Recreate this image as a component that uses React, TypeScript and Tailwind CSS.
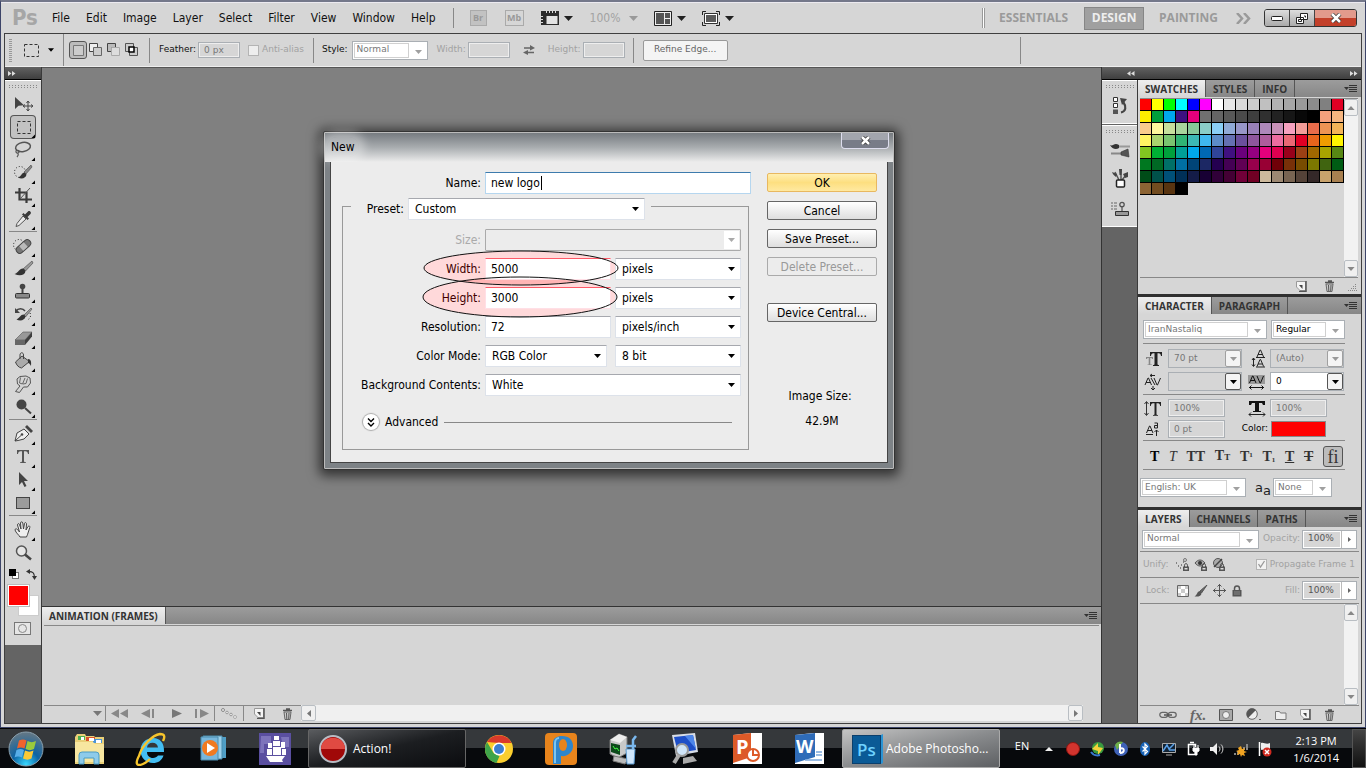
import { useId, type ReactNode } from "react";
import clsx from "clsx";

const menus = ["File", "Edit", "Image", "Layer", "Select", "Filter", "View", "Window", "Help"];

const swatches = [
  "ff0000 ffff00 00ff00 00ffff 0000ff ff00ff ffffff e6e6e6 d9d9d9 cccccc c0c0c0 b3b3b3 a6a6a6 9a9a9a 8c8c8c 808080 e00024",
  "fcee00 00a03c 00a8ec 3e1080 e4007c 707070 646464 585858 4a4a4a 3e3e3e 303030 222222 161616 080808 000000 f4a07c f5b580",
  "f9cc8c fef79c c6e09c a8d59c 88c999 8acdc8 8acef5 90aad6 9796c8 9880b8 ae88ba c890b8 f5a0be f29c98 e86c4a ee9454 f3b458",
  "fff462 a9d46e 7ac470 30b474 3cb8b4 40b8ef 5c8cc8 6470b2 6a4f9c 8e569c ae5c9c ec6ca0 ea6874 e00024 e8641c f09c00 fff400",
  "82c620 00b034 00a03c 00a098 00a8ec 0068b4 304498 401080 6a007c 940080 e4007c e00050 98001a 9c4014 a06800 a8a400 588814",
  "007820 006824 007068 0070a4 004478 1c2864 240050 440054 600054 98004c 980034 700008 783008 784c00 7c7800 406410 005c14",
  "004c18 00504a 005078 003058 141c48 180034 300038 440034 700038 700024 ccb99c 9c8872 786452 544238 342828 c8a26c a88050",
  "8c6434 724c20 583410 000000",
].flatMap((row) => row.split(" "));

const small = "font-['DejaVu_Sans',sans-serif] text-[9px]";

function Svg({ w, h, children, className }: { w: number; h: number; children: ReactNode; className?: string }) {
  return (
    <svg width={w} height={h} viewBox={`0 0 ${w} ${h}`} fill="none" aria-hidden="true" className={clsx("shrink-0", className)}>
      {children}
    </svg>
  );
}

function Down({ className = "text-[#222]" }: { className?: string }) {
  return (
    <Svg w={9} h={5} className={className}>
      <path d="M0 0h9L4.500 5z" fill="currentColor" />
    </Svg>
  );
}

/* ---------- tools ---------- */

const tools: { name: string; flyout?: boolean; art: ReactNode }[][] = [
  [
    {
      name: "Move",
      art: (
        <>
          <path d="M4 4v12l3.500-3.200 5.500-.6z" fill="#444" />
          <path d="M17 8.500v9M12.500 13h9M15.500 10l1.500-2 1.500 2M15.500 16l1.500 2 1.500-2M14 11.500L12 13l2 1.500M20 11.500l2 1.500-2 1.500" stroke="#444" />
        </>
      ),
    },
    { name: "Marquee", flyout: true, art: <rect x="6.500" y="5.500" width="13" height="12" stroke="#333" strokeDasharray="3 2" /> },
    {
      name: "Lasso",
      flyout: true,
      art: (
        <>
          <ellipse cx="12" cy="8" rx="7.500" ry="4.500" transform="rotate(-10 12 8)" stroke="#555" strokeWidth="1.500" />
          <path d="M6 11c-2 1-1 3.500 1 3s1-3-.5-2.500M7 14c1 2 0 3-1 4" stroke="#555" strokeWidth="1.200" />
        </>
      ),
    },
    {
      name: "Quick Selection",
      flyout: true,
      art: (
        <>
          <circle cx="9" cy="10" r="5.500" stroke="#222" strokeDasharray="1 2" />
          <path d="M20 3l-7 7 2 2 6-7z" fill="#888" stroke="#444" strokeWidth=".6" />
          <path d="M13.500 10.500c-3 0-3 4-6.500 5 4 2 8 .5 8.500-3z" fill="#333" />
        </>
      ),
    },
    {
      name: "Crop",
      flyout: true,
      art: (
        <>
          <path d="M8.500 3v11.500H21M4 7.500h11.500V18" stroke="#3a3a3a" strokeWidth="2.200" />
          <path d="M9 14L19 3" stroke="#555" />
        </>
      ),
    },
    {
      name: "Eyedropper",
      flyout: true,
      art: (
        <>
          <path d="M12 8l3 3-7 6.500-3 1 1-3z" fill="#e8e8e8" stroke="#555" />
          <path d="M11 6.500l5.500 5.500 1.500-1.500-1.500-1.500 3-3c1.500-1.500-1-4-2.500-2.500l-3 3L12.500 5z" fill="#3a3a3a" />
        </>
      ),
    },
  ],
  [
    {
      name: "Healing Brush",
      flyout: true,
      art: (
        <>
          <circle cx="8" cy="10" r="5.500" stroke="#222" strokeDasharray="1 2" />
          <rect x="4" y="8" width="17" height="7" rx="3.500" transform="rotate(-42 12.500 11.500)" fill="#777" stroke="#444" />
          <rect x="9.500" y="8.500" width="6" height="6" transform="rotate(-42 12.500 11.500)" fill="#bbb" />
        </>
      ),
    },
    {
      name: "Brush",
      flyout: true,
      art: (
        <>
          <path d="M21 3l-8.500 7.500 2 2.500L22 5z" fill="#999" stroke="#444" strokeWidth=".6" />
          <path d="M12.500 10.500C8 10 8 14.500 3.500 16c5 2.500 10.500 1.500 11-3z" fill="#333" />
        </>
      ),
    },
    {
      name: "Clone Stamp",
      flyout: true,
      art: (
        <>
          <circle cx="11.500" cy="5.500" r="2.800" fill="#444" />
          <path d="M10.500 8h2v5h-2z" fill="#444" />
          <rect x="4.500" y="12.500" width="14" height="4.500" rx="1" fill="#888" stroke="#333" />
        </>
      ),
    },
    {
      name: "History Brush",
      flyout: true,
      art: (
        <>
          <path d="M5 7c2-3 7-3 9 0" stroke="#444" strokeWidth="1.500" />
          <path d="M4 4v5h5z" fill="#444" />
          <path d="M20 4l-7 7 1.500 2L21 5z" fill="#999" stroke="#444" strokeWidth=".6" />
          <path d="M13 10.500c-4 0-4 3.500-7.500 5 4 2 8.500.5 9-3z" fill="#333" />
          <path d="M19 9c1.500 3 0 6-3 7" stroke="#222" strokeDasharray="1 2" />
        </>
      ),
    },
    {
      name: "Eraser",
      flyout: true,
      art: (
        <>
          <path d="M4 13l8-8h9l-7 8z" fill="#999" stroke="#555" strokeWidth=".6" />
          <path d="M4 13h10v5H4z" fill="#666" />
          <path d="M14 13l7-8v4.500L14 18z" fill="#3f3f3f" />
        </>
      ),
    },
    {
      name: "Paint Bucket",
      flyout: true,
      art: (
        <>
          <path d="M4.500 12L11 6l7.500 5.500-8 6.500c-3-.5-5-3-6-6z" fill="#aaa" stroke="#444" />
          <path d="M9 9V5c0-3 3.500-3 3.500 0v4" stroke="#444" />
          <path d="M17 9c3 0 3.500 3 3 7-1-2-2-3-3-3z" fill="#333" />
        </>
      ),
    },
    {
      name: "Smudge",
      flyout: true,
      art: (
        <>
          <path d="M4.500 18.500L9 13 6.500 11 6 6l3-2.500 6-.5 4 2 .5 5-3 4h-4l-4 5.500z" fill="#d4d4d4" stroke="#555" />
          <path d="M9.500 4.500L8.500 10l3 1 2.500-6M12 11l3-.5 1.500-5" stroke="#666" />
        </>
      ),
    },
    {
      name: "Burn",
      flyout: true,
      art: (
        <>
          <circle cx="10.500" cy="8.500" r="5" fill="#444" />
          <path d="M14 12l6 5.500" stroke="#444" strokeWidth="2" />
        </>
      ),
    },
  ],
  [
    {
      name: "Pen",
      flyout: true,
      art: (
        <>
          <path d="M4 18l2-8 7-4 5 5-5 5-6 1.500z" fill="#eee" stroke="#444" />
          <path d="M4 18l6-5.500" stroke="#444" />
          <circle cx="11" cy="11.500" r="1.300" fill="#444" />
          <path d="M14 4l2-2 6 6-2 2z" fill="#444" />
        </>
      ),
    },
    {
      name: "Type",
      flyout: true,
      art: <path d="M6 4h12v4h-1c-.3-2-1-2.800-2.500-2.800H13V15c0 1 .5 1.300 2 1.300v.8H9v-.8c1.500 0 2-.3 2-1.300V5.200H9.500C8 5.200 7.300 6 7 8H6z" fill="#555" />,
    },
    { name: "Path Selection", flyout: true, art: <path d="M8 3v13l3-3 2.500 5 2-1-2.500-5h4z" fill="#444" /> },
    {
      name: "Rectangle",
      flyout: true,
      art: <rect x="5.500" y="5.500" width="13" height="11" fill="#9c9c9c" stroke="#444" />,
    },
  ],
  [
    {
      name: "Hand",
      flyout: true,
      art: (
        <path d="M9 18c-1-2-4-4-5-7 0-1.500 1.500-1.500 2.500-.5L8.500 13 6.500 6c0-1.500 1.500-2 2-.5L10 10l-.5-6c0-1.500 2-1.500 2.300 0l.7 6 1-5.500c.3-1.500 2-1 2 .5L15 11l2-3.500c1-1 2.300-.3 1.800 1L17 14c-.5 2-1 2.500-1.500 4z" fill="#eee" stroke="#444" />
      ),
    },
    {
      name: "Zoom",
      art: (
        <>
          <circle cx="10.500" cy="9" r="5" fill="#e6e6e6" stroke="#555" strokeWidth="1.500" />
          <path d="M14 12.500l6 5" stroke="#444" strokeWidth="2.500" />
        </>
      ),
    },
  ],
];

function Grip() {
  return <div className="mx-auto h-1 w-[28px] bg-[repeating-linear-gradient(#d6d6d6_0_1px,transparent_1px_2px),repeating-linear-gradient(90deg,#888_0_1px,transparent_1px_3px)]" />;
}

function ToolBar() {
  return (
    <aside aria-label="Tools" className="flex w-[37px] shrink-0 flex-col border-r border-[#3a3a3a] bg-[#646464]">
      <div className="flex h-[13px] items-center border-b border-black bg-gradient-to-b from-[#626262] to-[#3f3f3f] pl-[3px]">
        <Svg w={8} h={5}>
          <path d="M0 0v5l3.500-2.500zM4 0v5l3.500-2.500z" fill="#ddd" />
        </Svg>
      </div>
      <div className="flex flex-col border-t border-white bg-[#d6d6d6] pt-[3px] pb-[10px]">
        <Grip />
        <div className="mt-1 flex flex-col">
          {tools.map((group, g) => (
            <div key={g} className="flex flex-col items-center">
              {g > 0 && <div className="mt-px mb-[2px] h-px w-7 bg-[#888]" />}
              {group.map((tool) => (
                <button key={tool.name} aria-label={tool.name} className="flex h-[23px] w-full items-center justify-center">
                  <span className={clsx("flex rounded-[3px]", tool.name === "Marquee" && "bg-[#c2c2c2] ring-1 ring-[#555]")}>
                    <Svg w={24} h={22}>
                      {tool.art}
                      {tool.flyout && <path d="M24 18.500V22h-3.500z" fill="#000" />}
                    </Svg>
                  </span>
                </button>
              ))}
            </div>
          ))}
        </div>
        <div className="mt-[5px] flex justify-between px-1">
          <Svg w={11} h={11}>
            <rect x="3.500" y="3.500" width="6" height="6" fill="#fff" stroke="#777" />
            <path d="M0 0h7v7H0z" fill="#000" />
          </Svg>
          <Svg w={11} h={11}>
            <path d="M3 2.500c4 0 5.500 1.500 5.500 6" stroke="#333" strokeWidth="1.300" />
            <path d="M0 2.500L4 0v5zM8.500 11L6 7h5z" fill="#333" />
          </Svg>
        </div>
        <div className="relative mt-[5px] ml-[3px] h-[31px] w-[31px]">
          <button aria-label="Background color" className="absolute right-0 bottom-0 size-[21px] border border-[#ccc] bg-white" />
          <button aria-label="Foreground color" className="absolute top-0 left-0 size-[21px] border border-white bg-[#f00] outline-1 outline-[#bbb]" />
        </div>
        <button aria-label="Quick mask" className="mt-[6px] ml-[9px] flex h-[13px] w-[17px] items-center justify-center border border-[#777] bg-[#e6e6e6]">
          <Svg w={9} h={9}>
            <circle cx="4.500" cy="4.500" r="4" stroke="#888" />
          </Svg>
        </button>
      </div>
    </aside>
  );
}

/* ---------- top bars ---------- */

function MenuBar() {
  return (
    <header className="flex h-[31px] shrink-0 items-center border-t border-[#eceaf0] pr-2 pl-[11px] text-xs">
      <span className="w-[40px] text-[22px] leading-6 font-bold text-[#a6a6a6]">Ps</span>
      <nav className="flex gap-4">
        {menus.map((m) => (
          <button key={m}>{m}</button>
        ))}
      </nav>
      <div className="ml-[17px] h-5 w-px bg-[#888]" />
      <button className="ml-4 h-4 w-[17px] border border-[#aaa] bg-[#c2c2c2] font-['Open_Sans'] text-[9px] leading-3 font-bold text-[#999]">Br</button>
      <button className="ml-[18px] h-4 w-[19px] border border-[#aaa] font-['Open_Sans'] text-[9px] leading-3 font-bold text-[#999]">Mb</button>
      <button aria-label="View extras" className="ml-[17px] flex items-center gap-[5px]">
        <Svg w={18} h={16}>
          <path d="M0 1h18v14H0z" fill="#2c2c2c" />
          <path d="M5.500 6h11v8h-11z" fill="#e4e4e4" />
          <path d="M5.500 1v2M8.500 1v2M11.500 1v2M14.500 1v2M0 6.500h2M0 9.500h2M0 12.500h2" stroke="#ddd" />
        </Svg>
        <Down />
      </button>
      <button className="ml-[17px] flex items-center gap-[9px] text-[#a2a2a2]">
        100%
        <Down className="text-[#999]" />
      </button>
      <button aria-label="Arrange documents" className="ml-4 flex items-center gap-[5px]">
        <Svg w={18} h={15}>
          <path d="M.5.500h17v14H.5z" fill="#eee" stroke="#222" />
          <path d="M2 2h8v11H2zM11 2h5v5h-5zM11 8h5v5h-5z" fill="#555" />
        </Svg>
        <Down />
      </button>
      <button aria-label="Screen mode" className="ml-4 flex items-center gap-[5px]">
        <Svg w={18} h={15}>
          <path d="M.5 4V.5H4M14 .5h3.500V4M17.500 11v3.500H14M4 14.500H.5V11" stroke="#222" />
          <path d="M2.500 2.500h13v10h-13z" fill="#fff" stroke="#333" />
          <path d="M4 4h10v7H4z" fill="#5a5a5a" />
        </Svg>
        <Down />
      </button>
      <div className="flex-1" />
      <div className="mr-[14px] h-5 w-[3px] border-x border-[#999] bg-white" />
      <div className="flex items-center font-['Open_Sans'] text-[12px] font-bold text-[#9a9a9a]">
        <button>ESSENTIALS</button>
        <button className="mr-[15px] ml-4 h-[23px] w-[60px] border border-[#868686] bg-[#a0a0a0] text-[#eee]">DESIGN</button>
        <button>PAINTING</button>
      </div>
      <button aria-label="More workspaces" className="mr-[13px] ml-[18px]">
        <Svg w={15} h={11}>
          <path d="M1 0l5 5.500L1 11M8 0l5 5.500L8 11" stroke="#9a9a9a" strokeWidth="2.500" />
        </Svg>
      </button>
      <div className="flex h-[18px] overflow-hidden rounded-[3px] border border-[#333]">
        <button aria-label="Minimize" className="flex w-[25px] items-center justify-center border-r border-[#444] bg-gradient-to-b from-[#ddd] to-[#aaa]">
          <Svg w={12} h={5}>
            <rect x=".5" y=".5" width="11" height="4" rx="1" fill="#fff" stroke="#222" />
          </Svg>
        </button>
        <button aria-label="Restore" className="flex w-[25px] items-center justify-center border-r border-[#444] bg-gradient-to-b from-[#ddd] to-[#aaa]">
          <Svg w={12} h={11}>
            <path d="M4.500.5h7v6h-7zM.5 4.500h7v6h-7z" fill="#fff" stroke="#222" />
            <path d="M2.500 6.500h3v2h-3zM8 3h1.500v1.500" stroke="#222" />
          </Svg>
        </button>
        <button aria-label="Close" className="flex w-[41px] items-center justify-center bg-gradient-to-b from-[#e29a8c] from-50% to-[#c3402a] to-50%">
          <Svg w={12} h={10}>
            <path d="M2 1l8 8M10 1L2 9" stroke="#333" strokeWidth="4" />
            <path d="M2 1l8 8M10 1L2 9" stroke="#fff" strokeWidth="2.500" />
          </Svg>
        </button>
      </div>
    </header>
  );
}

function PanelSelect({ label, value, className, tone = "text-[#777]" }: { label: string; value: string; className?: string; tone?: string }) {
  return (
    <span className={clsx("relative flex h-[19px] items-center border border-[#aaafb4] bg-white p-px", className)}>
      <select aria-label={label} className={clsx("h-full w-full appearance-none bg-white pl-[3px] outline-none", tone)}>
        <option>{value}</option>
      </select>
      <span className="pointer-events-none absolute inset-y-px right-[18px] left-px border border-[#d0d0d0]" />
      <Down className="pointer-events-none absolute top-[8px] right-[5px] h-1 w-[7px] text-[#a0a0a0]" />
    </span>
  );
}

function Box({ id, label, value, className }: { id: string; label?: string; value: string; className?: string }) {
  return (
    <input
      id={id}
      aria-label={label}
      defaultValue={value}
      className={clsx("border border-[#aaafb4] bg-[#d6d6d6] pl-[5px] text-[#777] shadow-[inset_0_0_0_1px_#eee] outline-none", className)}
    />
  );
}

function OptionsBar() {
  return (
    <div className={clsx("flex h-[33px] shrink-0 items-center border-b border-[#eee] bg-[#d6d6d6] pl-[4px]", small)}>
      <div className="h-[23px] w-[3px] bg-[repeating-linear-gradient(#999_0_1px,transparent_1px_2px)]" />
      <button aria-label="Marquee presets" className="ml-3 flex items-center gap-[9px]">
        <Svg w={15} h={13}>
          <rect x=".5" y=".5" width="14" height="12" stroke="#333" strokeDasharray="3 2" />
        </Svg>
        <Down className="h-1 w-[6px] text-black" />
      </button>
      <div className="ml-[9px] h-full w-px bg-[#888]" />
      <button aria-label="New selection" className="mr-[2px] ml-[5px] flex size-[18px] items-center justify-center rounded-[3px] border border-[#555] bg-[#bcbcbc]">
        <Svg w={11} h={11}>
          <path d="M.5.500h10v10H.5z" fill="#ccc" stroke="#777" />
        </Svg>
      </button>
      <div className="flex items-center gap-1">
        <button aria-label="Add to selection">
          <Svg w={14} h={14}>
            <path d="M.5.500h8v8h-8z" fill="#eee" stroke="#444" />
            <path d="M4.500 4.500h8v8h-8z" fill="#ccc" stroke="#666" />
          </Svg>
        </button>
        <button aria-label="Subtract from selection">
          <Svg w={14} h={14}>
            <path d="M.5.500h8v4h-4v4h-4z" fill="#bbb" stroke="#444" />
            <path d="M4.500 4.500h8v8h-8z" fill="#ddd" stroke="#aaa" />
          </Svg>
        </button>
        <button aria-label="Intersect with selection">
          <Svg w={14} h={14}>
            <path d="M.5.500h8v8h-8zM4.500 4.500h8v8h-8z" fill="#ccc" stroke="#555" />
            <path d="M4 4h5v5H4z" fill="#fff" stroke="#000" strokeWidth="1.500" />
          </Svg>
        </button>
      </div>
      <div className="ml-[10px] h-[25px] w-px bg-[#888]" />
      <label htmlFor="feather" className="ml-[9px]">Feather:</label>
      <Box id="feather" value="0 px" className="ml-[2px] h-4 w-[42px]" />
      <label className="ml-[8px] flex items-center gap-[3px] text-[#a2a2a2]">
        <input type="checkbox" className="size-[11px] appearance-none border border-[#b4b4b4] bg-[#eee]" />
        Anti-alias
      </label>
      <div className="ml-[9px] h-[25px] w-px bg-[#888]" />
      <span className="ml-[8px]">Style:</span>
      <PanelSelect label="Style" value="Normal" className="ml-1 w-[76px]" />
      <label htmlFor="fixed-w" className="ml-[9px] text-[#a2a2a2]">Width:</label>
      <Box id="fixed-w" value="" className="ml-[2px] h-4 w-[42px]" />
      <button aria-label="Swap" className="mx-[13px]">
        <Svg w={12} h={10}>
          <path d="M1 3h7M4 7.500h7" stroke="#666" strokeWidth="1.300" />
          <path d="M7 0l5 3-5 2.500zM5 5L0 7.500 5 10z" fill="#666" />
        </Svg>
      </button>
      <label htmlFor="fixed-h" className="text-[#a2a2a2]">Height:</label>
      <Box id="fixed-h" value="" className="ml-[2px] h-4 w-[42px]" />
      <div className="ml-[8px] h-[25px] w-px bg-[#888]" />
      <button className="ml-[9px] h-[21px] w-[85px] rounded-[2px] border border-[#999] bg-[#f4f4f4] text-[#666]">Refine Edge...</button>
      <div className="flex-1" />
      <div className="mr-[340px] h-[27px] w-px bg-[#888]" />
    </div>
  );
}

/* ---------- panels ---------- */

function Tabs({ names }: { names: string[] }) {
  return (
    <div className="flex h-[17px] shrink-0 items-stretch bg-gradient-to-b from-[#9c9c9c] to-[#878787] font-['Open_Sans'] text-[10px] leading-4 font-bold text-[#333]" role="tablist">
      {names.map((name, i) => (
        <button
          key={name}
          role="tab"
          aria-selected={i === 0}
          className={clsx("border-r border-[#555] px-[7px]", i === 0 && "bg-gradient-to-b from-[#eee] to-[#d6d6d6]")}
        >
          {name}
        </button>
      ))}
      <div className="flex-1" />
      <button aria-label="Panel menu" className="mr-1 flex items-center">
        <Svg w={13} h={8}>
          <path d="M0 2h5L2.500 5z" fill="#333" />
          <path d="M5 .5h8M5 2.500h8M5 4.500h8M5 6.500h8" stroke="#333" />
        </Svg>
      </button>
    </div>
  );
}

function ScrollBar() {
  return (
    <div className="flex w-[14px] shrink-0 flex-col justify-between bg-[#f2f2f2]">
      {["Scroll up", "Scroll down"].map((name, i) => (
        <button key={name} aria-label={name} className="flex h-[17px] items-center justify-center rounded-[2px] border border-[#b9bec3] bg-[#f0f0f0]">
          <Down className={clsx("h-1 w-2 text-[#888]", i === 0 && "rotate-180")} />
        </button>
      ))}
    </div>
  );
}

function NewIcon() {
  return (
    <Svg w={11} h={11}>
      <path d="M.5.500h9v9H4L.5 6z" fill="#f4f4f4" stroke="#999" />
      <path d="M10 0v10.500H3" stroke="#555" strokeWidth="1.500" />
      <path d="M3 4h3.500v4z" fill="#444" />
    </Svg>
  );
}

function TrashIcon() {
  return (
    <Svg w={11} h={12}>
      <path d="M1 2.500h9M4 1h4" stroke="#555" strokeWidth="1.400" />
      <path d="M2 4h7l-1 7.500H3z" fill="#ccc" stroke="#666" />
      <path d="M4.500 5l.3 6M7 5l-.3 6" stroke="#555" />
    </Svg>
  );
}

function IconDock() {
  return (
    <div className="flex w-[36px] shrink-0 flex-col border-r border-[#3a3a3a] bg-[#646464]">
      <div className="h-[44px] border-y border-white bg-[#d6d6d6] pt-[3px]">
        <Grip />
        <button aria-label="History" className="mx-auto mt-[9px] flex">
          <Svg w={16} h={18}>
            <path d="M1.500.500h4v4h-4zM1.500 6.500h4v4h-4z" fill="#fff" stroke="#333" />
            <path d="M1 12.500h5v4.500H1z" fill="#555" />
            <path d="M9 15.500c5-1 5.500-6 2.500-10" stroke="#444" strokeWidth="2.200" />
            <path d="M8 1l7 1-5 6z" fill="#444" />
          </Svg>
        </button>
      </div>
      <div className="mt-px flex h-[102px] flex-col items-center border-y border-white bg-[#d6d6d6] pt-[3px]">
        <Grip />
        <button aria-label="Brushes" className="mt-[9px]">
          <Svg w={20} h={16}>
            <path d="M9 4.500h11" stroke="#999" strokeWidth="2" />
            <path d="M0 3c3 2 4-3 9 0v3C6 8 2 7 0 3z" fill="#333" />
            <path d="M1 11.500h11" stroke="#888" strokeWidth="2" />
            <path d="M11 10l7-3 1 8-8-2z" fill="#555" stroke="#333" strokeWidth=".6" />
          </Svg>
        </button>
        <button aria-label="Brush presets" className="mt-[11px]">
          <Svg w={18} h={19}>
            <path d="M4 3l4 8M10 0v11M15 6l-4 5" stroke="#555" strokeWidth="1.500" />
            <path d="M1 3c1 3 3 4 4 5l1-3zM8 0h3l-.5 6h-2zM12 5l5-2v5l-3 1z" fill="#444" />
            <rect x="5.500" y="11" width="8" height="7" rx="1" fill="#fff" stroke="#222" strokeWidth="1.500" />
          </Svg>
        </button>
        <button aria-label="Clone source" className="mt-[13px]">
          <Svg w={18} h={16}>
            <path d="M0 2h2M3 2h3M0 5h2M3 5h3M0 8h2M3 8h3" stroke="#666" />
            <circle cx="11" cy="3.500" r="2.200" stroke="#555" strokeWidth="1.300" />
            <path d="M11 6v4M4.500 10.500h13v4h-13z" fill="#999" stroke="#333" />
          </Svg>
        </button>
      </div>
    </div>
  );
}

function SwatchesPanel() {
  return (
    <section className="flex h-[214px] shrink-0 flex-col bg-[#d6d6d6]">
      <Tabs names={["SWATCHES", "STYLES", "INFO"]} />
      <div className="mt-px mr-[3px] ml-[2px] flex flex-1 border-t border-b border-[#888]">
        <div className="grid flex-1 auto-rows-[12px] grid-cols-[repeat(17,12px)] content-start">
          {swatches.map((c, i) => (
            <button key={i} aria-label={`#${c}`} className="border-r border-b border-black" style={{ background: `#${c}` }} />
          ))}
        </div>
        <ScrollBar />
      </div>
      <div className="flex h-4 items-center justify-end gap-[17px] pr-[4px]">
        <button aria-label="New swatch"><NewIcon /></button>
        <button aria-label="Delete swatch"><TrashIcon /></button>
        <Svg w={9} h={9} className="-ml-1">
          <path d="M0 8.500h9M3 6.500h6M5 4.500h4M7 2.500h2" stroke="#888" strokeDasharray="1 1" />
        </Svg>
      </div>
    </section>
  );
}

function Combo({ label, value, live, className = "bg-[#d6d6d6] text-[#777]" }: { label: string; value: string; live?: boolean; className?: string }) {
  return (
    <span className={clsx("relative flex h-[19px] w-[74px] border border-[#aaafb4]", className)}>
      <select aria-label={label} className="w-full appearance-none pl-[5px] outline-none">
        <option>{value}</option>
      </select>
      <span className={clsx("pointer-events-none absolute inset-y-0 right-0 flex w-4 items-center justify-center rounded-[2px] border bg-[#f4f4f4]", live ? "border-[#555]" : "border-[#a0a0a0]")}>
        <Down className={clsx("h-1 w-[7px]", live ? "text-black" : "text-[#999]")} />
      </span>
    </span>
  );
}

const serif = "font-['Liberation_Serif',serif] text-[14px] leading-5 font-bold text-[#333]";

function CharacterPanel() {
  return (
    <section className={clsx("flex h-[210px] shrink-0 flex-col bg-[#d6d6d6]", small)}>
      <Tabs names={["CHARACTER", "PARAGRAPH"]} />
      <div className="mr-4 ml-[5px] flex flex-col">
        <div className="mt-[6px] flex justify-between">
          <PanelSelect label="Font family" value="IranNastaliq" className="w-[124px]" />
          <PanelSelect label="Font style" value="Regular" tone="text-black" className="w-[74px]" />
        </div>
        <div className="mt-1 h-px bg-[#888]" />
        <div className="mt-[5px] grid grid-cols-[25px_74px_28px_74px] items-center gap-y-1">
          <Svg w={20} h={18}>
            <path d="M3 7h7v2H9l-.5-1H7.300v6.500H9v.5H4.500v-.5h1.200V8H4.500L4 9H3z" fill="#888" />
            <path d="M7 2h12v4h-1c-.3-1.800-.8-2.700-2.300-2.700H14.500V14c0 .8.400 1 1.500 1v1h-6v-1c1.100 0 1.500-.2 1.500-1V3.300h-1.200C8.800 3.300 8.300 4.200 8 6H7z" fill="#222" />
          </Svg>
          <Combo label="Font size" value="70 pt" />
          <Svg w={20} h={19} className="ml-2">
            <path d="M7 8l3-7h.6l3 7M8 5.500h4.500M7 17.500l3-7h.6l3 7M8 15h4.500M6 8.500h9M6 18h9M3.500 9v8M2 11l1.500-2L5 11M2 15.500l1.500 2 1.500-2" stroke="#222" />
          </Svg>
          <Combo label="Leading" value="(Auto)" />
          <Svg w={20} h={18}>
            <path d="M2 12l3-7h.5l3 7M3 9.500h4.500M11 5l3 7h.5l3-7M8 5l4 7M7 2.500h5M9 1L7 2.500 9 4M10 13v4M8 15l2 2 2-2" stroke="#222" />
          </Svg>
          <Combo label="Kerning" value="" live />
          <Svg w={20} h={18} className="ml-1">
            <path d="M2 2h17v9H2z" fill="#999" />
            <path d="M3.500 10l3-7H7l3 7M4.500 7.500H9M11 3l3 7h.5l3-7M3 14.500h15M5.500 12.500l-2 2 2 2M15.500 12.500l2 2-2 2" stroke="#111" />
          </Svg>
          <Combo label="Tracking" value="0" live className="bg-white text-black" />
        </div>
        <div className="mt-[3px] h-px bg-[#888]" />
        <div className="mt-1 grid grid-cols-[25px_57px_45px_57px] items-center gap-y-[3px]">
          <Svg w={20} h={17}>
            <path d="M3.500 2v13M1.500 4l2-2.500 2 2.500M1.500 13l2 2.500 2-2.500" stroke="#333" />
            <path d="M7 2h11v4h-.8c-.3-2-.8-2.800-2.200-2.800h-1.500V14c0 .8.300 1 1.500 1v.8h-5V15c1.200 0 1.500-.2 1.500-1V3.200H10C8.600 3.200 8.100 4 7.800 6H7z" fill="#222" />
          </Svg>
          <Box id="v-scale" label="Vertical scale" value="100%" className="h-[18px] w-full" />
          <Svg w={20} h={17} className="ml-[22px]">
            <path d="M2 1h16v4h-2l-1-2h-3v8h2v1H6v-1h2V3H5L4 5H2z" fill="#111" />
            <path d="M2 14.500h16M4 12.500l-2 2 2 2M16 12.500l2 2-2 2" stroke="#222" />
          </Svg>
          <Box id="h-scale" label="Horizontal scale" value="100%" className="h-[18px] w-full" />
          <Svg w={20} h={16}>
            <path d="M3.500 12l3-7H7l3 7M4.500 9.500H9M3 13.500h7M13.500 9v6M11.500 11l2-2 2 2" stroke="#222" />
            <path d="M11.500 2h3v5h-3V4.500h3" stroke="#222" />
          </Svg>
          <Box id="baseline" label="Baseline shift" value="0 pt" className="h-[18px] w-full" />
          <span className="pr-[2px] text-right text-black">Color:</span>
          <button aria-label="Text color" className="mx-px h-4 border border-[#888] bg-[#f00]" />
        </div>
        <div className="mt-[2px] h-px bg-[#888]" />
        <div className={clsx("mt-[5px] flex h-[21px] items-center justify-between pr-[2px] pl-[7px]", serif)}>
          <button aria-label="Faux bold" className="text-black">T</button>
          <button aria-label="Faux italic" className="font-normal italic">T</button>
          <button aria-label="All caps">TT</button>
          <button aria-label="Small caps">T<span className="text-[9px]">T</span></button>
          <button aria-label="Superscript">T<sup className="text-[7px]">1</sup></button>
          <button aria-label="Subscript">T<sub className="text-[7px]">1</sub></button>
          <button aria-label="Underline" className="underline">T</button>
          <button aria-label="Strikethrough" className="line-through">T</button>
          <button aria-label="Ligatures" className="h-[21px] w-5 rounded-[3px] border border-[#555] bg-[#bcbcbc] text-[18px] font-normal">fi</button>
        </div>
        <div className="mt-[2px] h-px bg-[#888]" />
        <div className="mt-[8px] -ml-[3px] flex items-center">
          <PanelSelect label="Language" value="English: UK" className="w-[106px]" />
          <span className="mr-[2px] ml-[9px] text-[13px] leading-4 text-[#222]">a<sub className="text-[13px]">a</sub></span>
          <PanelSelect label="Anti-aliasing" value="None" className="w-[59px]" />
        </div>
      </div>
    </section>
  );
}

function Percent({ id }: { id: string }) {
  return (
    <span className="flex h-[19px] w-[55px] border border-[#aaafb4] bg-white">
      <input id={id} defaultValue="100%" className="m-px w-[36px] bg-[#d6d6d6] pl-[4px] text-[#555] outline-none" />
      <button aria-label={`${id} slider`} className="flex flex-1 items-center justify-center border-l border-[#bbb]">
        <Svg w={3} h={5}>
          <path d="M0 0l3 2.500L0 5z" fill="#666" />
        </Svg>
      </button>
    </span>
  );
}

function Lock() {
  return (
    <>
      <path d="M8.500 9V7.500c0-2.500 3-2.500 3 0V9" stroke="#444" />
      <path d="M7 8.500h6V13H7z" fill="#555" />
      <path d="M8.500 10h3v1.500h-3z" fill="#ddd" />
    </>
  );
}

function LayersPanel() {
  return (
    <section className={clsx("flex flex-1 flex-col bg-[#d6d6d6] text-[#a2a2a2]", small)}>
      <Tabs names={["LAYERS", "CHANNELS", "PATHS"]} />
      <div className="mx-[2px] flex flex-1 flex-col">
        <div className="flex h-[25px] items-center border-b border-[#888] pr-[2px] pl-[2px]">
          <PanelSelect label="Blend mode" value="Normal" className="w-[117px]" />
          <label htmlFor="opacity" className="mr-[2px] flex-1 text-right">Opacity:</label>
          <Percent id="opacity" />
        </div>
        <div className="flex h-[26px] items-center border-b border-[#888] pr-1 pl-[3px]">
          <span className="w-[33px]">Unify:</span>
          <div className="flex gap-1">
            <button aria-label="Unify position">
              <Svg w={14} h={14}>
                <path d="M0 5h1M2 8h1M4 10h1M5 7h1M7 4h1" stroke="#666" strokeWidth="1.500" />
                <circle cx="9" cy="2" r="1.500" stroke="#777" />
                <Lock />
              </Svg>
            </button>
            <button aria-label="Unify visibility">
              <Svg w={14} h={14}>
                <path d="M1 5c3-4 7-4 10 0-3 4-7 4-10 0z" fill="#aaa" stroke="#555" />
                <circle cx="6" cy="5" r="2" fill="#333" />
                <Lock />
              </Svg>
            </button>
            <button aria-label="Unify style">
              <Svg w={14} h={14}>
                <circle cx="6" cy="5" r="4.500" fill="#aaa" stroke="#555" />
                <path d="M2 9l8-8" stroke="#444" strokeWidth="1.500" />
                <Lock />
              </Svg>
            </button>
          </div>
          <label className="ml-auto flex items-center gap-[3px] whitespace-nowrap">
            <span className="relative flex">
              <input type="checkbox" defaultChecked className="size-[11px] appearance-none border border-[#b4b4b4] bg-[#f2f2f2]" />
              <Svg w={11} h={11} className="absolute inset-0">
                <path d="M2.500 5l2 3 4-6" stroke="#999" strokeWidth="1.300" />
              </Svg>
            </span>
            Propagate Frame 1
          </label>
        </div>
        <div className="flex h-[26px] items-center border-b border-[#888] pr-[2px] pl-[6px]">
          <span className="w-[31px]">Lock:</span>
          <div className="flex items-center gap-[5px]">
            <button aria-label="Lock transparency">
              <Svg w={12} h={12}>
                <path d="M.5.500h11v11H.5z" fill="#fff" stroke="#666" />
                <path d="M1 1h3v3H1zM8 1h3v3H8zM4 4h4v4H4zM1 8h3v3H1zM8 8h3v3H8z" fill="#ccc" />
              </Svg>
            </button>
            <button aria-label="Lock pixels">
              <Svg w={14} h={12}>
                <path d="M13 0L6 6l1.500 2z" fill="#666" stroke="#555" />
                <path d="M6 6c-3 0-2.500 4-5.500 5.500 4 .5 7-.5 7-3.500z" fill="#555" />
              </Svg>
            </button>
            <button aria-label="Lock position">
              <Svg w={13} h={13}>
                <path d="M6.500 0v13M0 6.500h13M4.500 2.500l2-2 2 2M4.500 10.500l2 2 2-2M2.500 4.500l-2 2 2 2M10.500 4.500l2 2-2 2" stroke="#555" />
              </Svg>
            </button>
            <button aria-label="Lock all">
              <Svg w={13} h={12}>
                <path d="M3.500 6V3.500c0-3.500 5-3.500 5 0V6" stroke="#555" strokeWidth="1.500" />
                <path d="M1.500 5h9v6.500h-9z" fill="#555" />
                <path d="M3 7h6M3 9h6" stroke="#888" />
              </Svg>
            </button>
          </div>
          <label htmlFor="fill" className="mr-[2px] flex-1 text-right">Fill:</label>
          <Percent id="fill" />
        </div>
        <div className="flex flex-1 justify-end border-b border-[#888] pr-px">
          <ScrollBar />
        </div>
        <div className="flex h-[17px] items-center justify-between pr-6 pl-[19px]">
          <button aria-label="Link layers">
            <Svg w={18} h={8}>
              <rect x=".8" y="1.300" width="8" height="5" rx="2.500" stroke="#666" strokeWidth="1.300" />
              <rect x="9.200" y="1.300" width="8" height="5" rx="2.500" stroke="#666" strokeWidth="1.300" />
              <path d="M5 4h8" stroke="#555" strokeWidth="1.500" />
            </Svg>
          </button>
          <button aria-label="Layer style" className="font-['Liberation_Serif',serif] text-[15px] leading-4 font-bold text-[#666] italic">fx.</button>
          <button aria-label="Layer mask">
            <Svg w={14} h={12}>
              <path d="M.5.500h13v11H.5z" fill="#aaa" stroke="#555" />
              <circle cx="7" cy="6" r="3.500" fill="#eee" stroke="#777" />
            </Svg>
          </button>
          <button aria-label="Adjustment layer">
            <Svg w={16} h={13}>
              <circle cx="6" cy="6" r="5.300" fill="#eee" stroke="#666" />
              <path d="M2 10L10 2C6-1 1 1 .8 6c0 2 .7 3 1.200 4z" fill="#555" />
              <path d="M13 11h2v1h-2z" fill="#666" />
            </Svg>
          </button>
          <button aria-label="New group">
            <Svg w={12} h={10}>
              <path d="M.5 9.500V1.500h4l1 1.500h5.500v6.500z" fill="#eee" stroke="#777" />
            </Svg>
          </button>
          <button aria-label="New layer"><NewIcon /></button>
          <button aria-label="Delete layer"><TrashIcon /></button>
        </div>
      </div>
    </section>
  );
}

function AnimationPanel() {
  return (
    <section className="flex h-[117px] shrink-0 flex-col border-t border-[#333] bg-[#d6d6d6]">
      <Tabs names={["ANIMATION (FRAMES)"]} />
      <div className="mx-[2px] mt-px h-px bg-[#888]" />
      <div className="flex-1" />
      <div className="mx-[2px] mb-[2px] flex h-4">
        <div className="flex w-[257px] items-center border-t border-[#888] text-[#888]">
          <button aria-label="Loop count" className="ml-[49px]"><Down className="text-[#777]" /></button>
          <div className="mr-[5px] ml-[3px] h-full w-px bg-[#888]" />
          <button aria-label="First frame"><Svg w={17} h={9}><path d="M8 0v9L0 4.500zM17 0v9L9 4.500z" fill="currentColor" /></Svg></button>
          <button aria-label="Previous frame" className="ml-[13px]"><Svg w={14} h={9}><path d="M9 0v9L0 4.500zM11 0h2v9h-2z" fill="currentColor" /></Svg></button>
          <button aria-label="Play" className="ml-[17px]"><Svg w={10} h={9}><path d="M0 0v9l10-4.500z" fill="#777" /></Svg></button>
          <button aria-label="Next frame" className="ml-[13px]"><Svg w={14} h={9}><path d="M0 0h2v9H0zM5 0v9l9-4.500z" fill="currentColor" /></Svg></button>
          <div className="ml-[5px] h-full w-px bg-[#888]" />
          <button aria-label="Tween" className="ml-[6px]">
            <Svg w={16} h={11}>
              <circle cx="2" cy="2" r="1.500" fill="#eee" stroke="#888" />
              <circle cx="6" cy="4.500" r="1.300" fill="#eee" stroke="#999" />
              <circle cx="10" cy="6.500" r="1.300" fill="#eee" stroke="#999" />
              <circle cx="14" cy="9" r="1.500" fill="#eee" stroke="#aaa" />
            </Svg>
          </button>
          <div className="ml-[6px] h-full w-px bg-[#888]" />
          <button aria-label="Duplicate frame" className="ml-[10px]"><NewIcon /></button>
          <button aria-label="Delete frame" className="ml-[17px]"><TrashIcon /></button>
        </div>
        <div className="flex flex-1 justify-between bg-[#f0f0f0]">
          <button aria-label="Scroll left" className="flex w-[15px] items-center justify-center rounded-[2px] border border-[#b9bec3]">
            <Svg w={4} h={7}><path d="M4 0v7L0 3.500z" fill="#777" /></Svg>
          </button>
          <button aria-label="Scroll right" className="flex w-[15px] items-center justify-center rounded-[2px] border border-[#b9bec3]">
            <Svg w={4} h={7}><path d="M0 0v7l4-3.500z" fill="#777" /></Svg>
          </button>
        </div>
        <div className="w-4" />
      </div>
    </section>
  );
}

/* ---------- New document dialog ---------- */

function DialogSelect({ id, label, value, className, disabled }: { id?: string; label?: string; value: string; className?: string; disabled?: boolean }) {
  return (
    <span
      className={clsx(
        "relative flex h-[22px] rounded-[1px] border",
        disabled ? "border-[#aaa] bg-[#ececec]" : "border-[#dde2ea] border-t-[#a6a8ae] bg-white",
        className,
      )}
    >
      <select id={id} aria-label={label} disabled={disabled} className="w-full appearance-none pl-[6px] outline-none">
        <option>{value}</option>
      </select>
      <span className={clsx("pointer-events-none absolute inset-y-px right-px flex w-[15px] items-center justify-center", disabled && "bg-white")}>
        <Down className={clsx("h-1 w-[7px]", disabled ? "text-[#aaa]" : "text-black")} />
      </span>
    </span>
  );
}

function Row({ label, value, unit, unitLabel, marked }: { label: string; value: string; unit: string; unitLabel: string; marked?: boolean }) {
  const id = useId();
  return (
    <div className="flex items-center">
      <label htmlFor={id} className={clsx("w-[138px] text-right", marked && "text-[#400000]")}>{label}</label>
      <input
        id={id}
        defaultValue={value}
        className={clsx("ml-1 h-[22px] w-[126px] border bg-white pl-[5px] outline-none", marked ? "border-[#ffdfe6] border-t-[#ff5a68]" : "border-[#dde2ea] border-t-[#a6a8ae]")}
      />
      <DialogSelect label={unitLabel} value={unit} className="ml-1 w-[126px]" />
    </div>
  );
}

function DialogButton({ children, className }: { children: ReactNode; className?: string }) {
  return (
    <button className={clsx("h-[19px] w-full rounded-[2px] border leading-4", className ?? "border-[#666] bg-gradient-to-b from-white to-[#dedede] text-black")}>
      {children}
    </button>
  );
}

function NewDialog() {
  return (
    <div
      role="dialog"
      aria-label="New"
      className="absolute top-[131px] left-[323px] flex w-[572px] flex-col rounded-[2px] border border-[#333] bg-[#7d8286] px-[6px] pb-[6px] text-xs text-black shadow-[0_2px_12px_4px_rgba(0,0,0,0.6)] ring-1 ring-[#bbb] ring-inset"
    >
      <div className="-mx-[5px] mt-px flex h-[29px] justify-between bg-gradient-to-b from-[#767b80] via-[#a9adb0] to-[#ececec] pl-[2px]">
        <h1 className="mt-[4px] h-5 rounded-full bg-white/30 px-[4px] leading-5 shadow-[0_0_10px_6px_rgba(255,255,255,0.35)]">New</h1>
        <button aria-label="Close dialog" className="mr-1 flex h-4 w-[48px] items-center justify-center rounded-b-[4px] border border-t-0 border-[#dde] bg-gradient-to-b from-[#a2a5ad] from-50% to-[#787c88] to-50%">
          <Svg w={11} h={9}>
            <path d="M2 1l7 7M9 1L2 8" stroke="#333" strokeWidth="4" />
            <path d="M2 1l7 7M9 1L2 8" stroke="#fff" strokeWidth="2.500" />
          </Svg>
        </button>
      </div>
      <div className="flex border border-t-0 border-[#444] bg-[#ececec] pt-[10px] pr-[10px] pb-[12px] pl-[11px]">
        <div className="w-[409px]">
          <div className="relative flex items-center">
            <label htmlFor="doc-name" className="w-[139px] text-right">Name:</label>
            <input id="doc-name" defaultValue="new logo" className="ml-1 h-[22px] w-[266px] border border-[#b5d6ef] border-t-[#3d7bad] bg-white pl-[5px] outline-none" />
            <span className="absolute left-[199px] h-[14px] w-px bg-black" />
          </div>
          <div className="relative mt-[12px] flow-root h-[244px] w-[407px] border-r border-b border-l border-[#999]">
            <div className="-mt-2 flex">
              <div className="mt-2 h-px w-2 bg-[#999]" />
              <label htmlFor="preset" className="w-[53px] text-right leading-[22px]">Preset:</label>
              <DialogSelect id="preset" value="Custom" className="mr-[6px] ml-1 w-[237px]" />
              <div className="mt-2 h-px flex-1 bg-[#999]" />
            </div>

            <svg className="absolute top-[40px] left-[78px]" width="200" height="74" viewBox="0 0 200 74" aria-hidden="true">
              <ellipse cx="100" cy="22" rx="97" ry="17" fill="#ffd9da" />
              <ellipse cx="99" cy="51" rx="97" ry="20" fill="#ffd9da" />
              <path d="M38 35Q99 26 158 36Q100 42 38 35z" fill="#ffb5b5" />
            </svg>

            <div className="relative mt-[9px] flex flex-col gap-[7px]">
              <div className="flex items-center">
                <label htmlFor="size" className="w-[138px] text-right text-[#aaa]">Size:</label>
                <DialogSelect id="size" value="" disabled className="ml-1 w-[256px]" />
              </div>
              <Row label="Width:" value="5000" unit="pixels" unitLabel="Width unit" marked />
              <Row label="Height:" value="3000" unit="pixels" unitLabel="Height unit" marked />
              <Row label="Resolution:" value="72" unit="pixels/inch" unitLabel="Resolution unit" />
              <div className="flex items-center">
                <label htmlFor="color-mode" className="w-[138px] text-right">Color Mode:</label>
                <DialogSelect id="color-mode" value="RGB Color" className="mr-2 ml-1 w-[122px]" />
                <DialogSelect label="Bit depth" value="8 bit" className="w-[126px]" />
              </div>
              <div className="flex items-center">
                <label htmlFor="contents" className="w-[138px] text-right whitespace-nowrap">Background Contents:</label>
                <DialogSelect id="contents" value="White" className="ml-1 w-[256px]" />
              </div>
            </div>

            <svg className="pointer-events-none absolute top-[40px] left-[78px]" width="200" height="74" viewBox="0 0 200 74" fill="none" stroke="#111" aria-hidden="true">
              <ellipse cx="100" cy="22" rx="97" ry="17" />
              <ellipse cx="99" cy="51" rx="97" ry="20" />
            </svg>

            <div className="mt-[18px] mr-4 ml-[20px] flex items-center">
              <button className="flex items-center gap-[6px]">
                <span className="flex size-4 items-center justify-center rounded-full bg-white shadow-[0_0_1px_1px_#aaa]">
                  <Svg w={8} h={9}>
                    <path d="M1 .5L4 3.500l3-3M1 5l3 3 3-3" stroke="#000" strokeWidth="1.400" />
                  </Svg>
                </span>
                Advanced
              </button>
              <div className="ml-[6px] h-px flex-1 bg-[#888]" />
            </div>
          </div>
        </div>
        <div className="mt-px ml-auto flex w-[110px] flex-col gap-[9px] text-center">
          <DialogButton className="border-[#e8b860] bg-gradient-to-b from-[#ffefb0] via-[#fddf80] to-[#ffe9a0]">OK</DialogButton>
          <DialogButton>Cancel</DialogButton>
          <DialogButton>Save Preset...</DialogButton>
          <DialogButton className="border-[#aaa] text-[#999]">Delete Preset...</DialogButton>
          <div className="h-[9px]" />
          <DialogButton>Device Central...</DialogButton>
          <p className="mt-[57px] mr-1 leading-4">Image Size:</p>
          <output className="leading-4">42.9M</output>
        </div>
      </div>
    </div>
  );
}

/* ---------- taskbar ---------- */

const pinned: { name: string; art: ReactNode }[] = [
  {
    name: "Explorer",
    art: (
      <>
        <path d="M2 5l2-3h8l1 2h8l1 1h9v27H2z" fill="#e9cf78" />
        <path d="M5 4h7v4H5z" fill="#4caf50" />
        <path d="M13 5h9v4h-9z" fill="#d9532c" />
        <path d="M20 7h9v4h-9z" fill="#4a94d8" />
        <path d="M8 5h3v3H8zM16 6h5v3h-5zM23 8h5v3h-5z" fill="#fff" />
        <path d="M2 10h18l2 2h9v18H2z" fill="#f7e6a0" />
        <path d="M6 32V23q0-3 3-3h14q3 0 3 3v9h-5v-6H11v6z" fill="#8ecbea" stroke="#4b9cc4" />
      </>
    ),
  },
  {
    name: "Internet Explorer",
    art: (
      <>
        <path d="M29 20H12c0 3.500 2.500 6 6 6 2 0 4-1 5-2.500h5.500C27 28.500 23 31 18 31 11 31 5.500 26 5.500 18.500S11 6 18 6s11.500 5 11 14zM12 15.500h11c-.3-3-2.500-4.800-5.500-4.800S12.300 12.500 12 15.500z" fill="#43bdf2" />
        <path d="M4.500 23C0 31 1 35 8 32c3-1.300 5-3 7-5M4 24C7 13 18 3 25 2c5 0 5 3 3 7" stroke="#f6c42c" strokeWidth="2.400" />
      </>
    ),
  },
  {
    name: "Media Player",
    art: (
      <>
        <path d="M9 5h20v21H9z" fill="#4f9ec6" />
        <path d="M6 4h19v23H6z" fill="#9cd0ea" stroke="#4b8cae" />
        <path d="M4 5h17v23H4z" fill="#78b7dc" stroke="#4b8cae" />
        <circle cx="13" cy="16" r="8" fill="#f07a20" />
        <path d="M10 11v10l8-5z" fill="#fff" />
      </>
    ),
  },
  {
    name: "Ship",
    art: (
      <>
        <path d="M0 1h32v32H0z" fill="#5a4fa0" />
        <path d="M2 4h10v8H5v9H1zM22 5h8v10h-6z" fill="#7d74bb" />
        <path d="M15 4h5v4h-5zM14 9h7v5h-7zM9 11h4v5H9zM22 10h4v6h-4zM8 17h5v6H8zM14 15h8v8h-8zM23 17h4v6h-4zM7 24h19l-3 4 1 2H11z" fill="#fff" />
      </>
    ),
  },
];

const running: { name: string; art: ReactNode }[] = [
  {
    name: "Chrome",
    art: (
      <>
        <circle cx="16" cy="17" r="14" fill="#fbce2e" />
        <path d="M4 10a14 14 0 0 1 24.500 1H16z" fill="#d93a2b" />
        <path d="M4 10l6.500 11 6 3-3 7A14 14 0 0 1 4 10z" fill="#3fa44a" />
        <circle cx="16" cy="17" r="6.500" fill="#fff" />
        <circle cx="16" cy="17" r="5" fill="#3c7fd0" />
      </>
    ),
  },
  {
    name: "P player",
    art: (
      <>
        <rect y="1" width="32" height="32" rx="4" fill="#e8841c" />
        <path d="M8 32V11c0-5 4-7 9-7 7 0 11 4 11 10s-5 11-12 10v8z" fill="#2f86cc" />
        <ellipse cx="18" cy="13" rx="4" ry="6" fill="#e8841c" />
        <path d="M10 31V11c0-3 2-5 4-5" stroke="#7ec6f0" strokeWidth="2" />
      </>
    ),
  },
  {
    name: "Emulator",
    art: (
      <>
        <path d="M3 8l9-6 8 3v16l-9 5-8-4z" fill="#c9c9c9" stroke="#777" />
        <path d="M3 8l9-6 8 3-7 6z" fill="#eee" />
        <path d="M4 11l9 2v10l-9-3z" fill="#0c4a1a" />
        <path d="M6 14l2 3 2-1 2 3" stroke="#4f4" />
        <path d="M7 24l14 3-3 5-12-3z" fill="#bbb" stroke="#777" />
        <path d="M19 17h9l-1 15h-7z" fill="#cfe6fb" stroke="#5a9ad0" />
        <path d="M26 17V8l3-4M19 14h10" stroke="#7ab8ee" strokeWidth="2.500" />
      </>
    ),
  },
  {
    name: "Screen tool",
    art: (
      <>
        <path d="M3 3l23-2 3 19-22 4z" fill="#d8dde6" />
        <path d="M5 5l19-2 3 15-18 3z" fill="#1e4fc8" />
        <path d="M16 4l8-1 3 14z" fill="#4d86ea" />
        <path d="M14 26l10-2 4 5-14 3z" fill="#aaa" />
        <circle cx="13" cy="18" r="6" fill="#cfe4f8" stroke="#999" strokeWidth="2" />
        <path d="M10 23l-5 8" stroke="#aaa" strokeWidth="4" />
      </>
    ),
  },
  {
    name: "PowerPoint",
    art: (
      <>
        <path d="M2 3l18-2h11v31H2z" fill="#fff" />
        <path d="M2 3l18-2v24L2 31z" fill="#dd5a28" />
        <text x="5" y="22" fontSize="20" fontWeight="bold" fill="#fff" fontFamily="Open Sans">P</text>
        <circle cx="22" cy="23" r="6" fill="#fff" stroke="#dd5a28" strokeWidth="2" />
        <path d="M22 17v6h6" stroke="#dd5a28" strokeWidth="2" />
      </>
    ),
  },
  {
    name: "Word",
    art: (
      <>
        <path d="M2 3l18-2h11v31H2z" fill="#fff" />
        <path d="M2 3l20-2v24L2 31z" fill="#2f6cb8" />
        <text x="3" y="21" fontSize="18" fontWeight="bold" fill="#fff" fontFamily="Open Sans">W</text>
        <path d="M23 20h6M23 23h6M12 28h17" stroke="#7aa6dc" strokeWidth="1.500" />
      </>
    ),
  },
];

const tray: { name: string; art: ReactNode }[] = [
  { name: "Recorder", art: <circle cx="8" cy="8" r="6.500" fill="#d2342e" stroke="#8a1410" /> },
  {
    name: "Download manager",
    art: (
      <>
        <circle cx="9" cy="7" r="6" fill="#3a9a40" />
        <path d="M3 8l6-6v4l5 1-5 7v-4z" fill="#f3d23a" />
        <path d="M2 11c2 3 6 4 9 3" stroke="#3a7ad0" strokeWidth="2" />
      </>
    ),
  },
  {
    name: "Updater",
    art: (
      <>
        <circle cx="8" cy="8" r="7" fill="#3f62b8" />
        <path d="M2 4a7 7 0 0 1 8-3L4 9z" fill="#6fb04a" />
        <path d="M7 3v9M7 8c4-3 6 4 0 4" stroke="#fff" strokeWidth="2" />
      </>
    ),
  },
  {
    name: "Bluetooth",
    art: (
      <>
        <ellipse cx="8" cy="8" rx="5" ry="7" fill="#1763b8" />
        <path d="M5.500 5.500l5 5L8 13V3l2.500 2.500-5 5" stroke="#fff" strokeWidth="1.200" />
      </>
    ),
  },
  {
    name: "Display",
    art: (
      <>
        <path d="M1.500 2.500h13v9h-13zM5 14h6" fill="#123" stroke="#aaa" />
        <path d="M2 10l4-6 2 4 5-5M8 9h6" stroke="#5aa0e8" strokeWidth="1.500" />
      </>
    ),
  },
  {
    name: "Power",
    art: (
      <>
        <path d="M3.500 3.500h7v10h-7zM5 1.500h4" stroke="#fff" strokeWidth="1.500" />
        <path d="M7 6h8v4l-2 2v3h-3v-3l-3-2z" fill="#07090c" />
        <path d="M8 7h6v3l-2 1v3h-2v-3L8 10zM9 4v3M13 4v3" fill="#fff" stroke="#fff" />
      </>
    ),
  },
  {
    name: "Volume",
    art: (
      <>
        <path d="M1 6h3l4-4v12l-4-4H1z" fill="#eee" />
        <path d="M10 5.500c1.300 1.500 1.300 3.500 0 5M12 3.500c2.500 2.500 2.500 6.500 0 9" stroke="#ddd" />
      </>
    ),
  },
  {
    name: "Network",
    art: (
      <>
        <path d="M1 12h2v2H1zM4 10h2v4H4zM10 6h2v3h-2zM13 3h2v6h-2z" fill="#888" />
        <path d="M8 5l1 3 3-1-1 3 3 1-3 1 1 3-3-1-1 2-1-3-3 1 1-3-2-1 3-1-1-2z" fill="#f0a422" />
      </>
    ),
  },
  {
    name: "Action center",
    art: (
      <>
        <path d="M2.500 1v14" stroke="#fff" strokeWidth="1.500" />
        <path d="M4 2c3-1 5 2 9 0v7c-4 2-6-1-9 0z" fill="#eee" />
        <circle cx="10" cy="11" r="4.500" fill="#d02a20" />
        <path d="M8 9l4 4M12 9l-4 4" stroke="#fff" strokeWidth="1.500" />
      </>
    ),
  },
];

function Apps({ items }: { items: typeof pinned }) {
  return items.map((app) => (
    <button key={app.name} aria-label={app.name} className="flex w-[62px] shrink-0 items-center justify-center">
      <Svg w={32} h={34}>{app.art}</Svg>
    </button>
  ));
}

function TaskBar() {
  return (
    <footer className="flex h-10 shrink-0 items-stretch border-t border-black bg-gradient-to-b from-[#35383b] from-50% to-[#07090c] to-50% font-['Open_Sans',sans-serif] text-[12px] text-white">
      <button aria-label="Start" className="flex w-[58px] shrink-0 items-center pl-2">
        <Svg w={36} h={36}>
          <defs>
            <radialGradient id="orb" cx=".5" cy=".95" r=".9">
              <stop offset="0" stopColor="#38d8ff" />
              <stop offset=".45" stopColor="#0c63a4" />
              <stop offset="1" stopColor="#5f7686" />
            </radialGradient>
          </defs>
          <circle cx="18" cy="18" r="17" fill="url(#orb)" stroke="#8aa0ae" />
          <path d="M11 9.500c3-1.500 5-1.500 7.500 0l-2 8c-3-1.500-5-1.500-7.500 0z" fill="#f0642c" />
          <path d="M19.500 10c3 1.500 5.500 1.500 8.500 0l-2 8c-3 1.500-5.500 1.500-8.500 0z" fill="#9aca3c" />
          <path d="M8.500 19c3-1.500 5-1.500 7.500 0l-2 7.500c-3-1.500-5-1.500-7.500 0z" fill="#58aee8" />
          <path d="M17 19.500c3 1.500 5.500 1.500 8.500 0l-2 8c-3 1.500-5.500 1.500-8.500 0z" fill="#fbc936" />
        </Svg>
      </button>
      <Apps items={pinned} />
      <button className="mx-[2px] flex w-[158px] shrink-0 items-center gap-[5px] rounded-[2px] border border-[#666] bg-gradient-to-br from-[#5a5c5f] via-[#1c1e21] to-[#0b0c0f] pl-[9px]">
        <Svg w={30} h={30}>
          <circle cx="15" cy="15" r="13" fill="#a00808" stroke="#b8bcc4" strokeWidth="2" />
          <path d="M3 15C3 0 27 0 27 15z" fill="#e04a42" />
        </Svg>
        Action!
      </button>
      <Apps items={running} />
      <button className="mx-[2px] flex w-[158px] shrink-0 items-center gap-[3px] rounded-[2px] border border-[#aaa] bg-gradient-to-br from-[#c4c4c4] via-[#8a8c8e] to-[#5e6063] pl-[9px] whitespace-nowrap">
        <Svg w={31} h={32}>
          <path d="M0 2h29v29H0z" fill="#0b3f6c" />
          <path d="M29 2l2-1v29l-2 1z" fill="#2b94d4" />
          <path d="M1 3h27v27H1z" fill="#0a5a96" />
          <text x="5" y="23" fontSize="17" fontWeight="600" fill="#6fd2ff" fontFamily="Open Sans">Ps</text>
        </Svg>
        Adobe Photosho...
      </button>
      <div className="flex-1" />
      <div className="flex items-center">
        <button className="mr-4 mb-[4px] text-[11px]">EN</button>
        <button aria-label="Show hidden icons" className="mr-[12px]">
          <Svg w={8} h={4}><path d="M0 4h8L4 0z" fill="#eee" /></Svg>
        </button>
        <div className="flex gap-2">
          {tray.map((t) => (
            <button key={t.name} aria-label={t.name}>
              <Svg w={16} h={16}>{t.art}</Svg>
            </button>
          ))}
        </div>
        <time dateTime="2014-01-06T14:13" className="mr-[13px] ml-[20px] flex flex-col items-center text-[11px] leading-[17px]">
          <span>2:13 PM</span>
          <span>1/6/2014</span>
        </time>
      </div>
      <button aria-label="Show desktop" className="w-[14px] shrink-0 border border-[#555] bg-gradient-to-b from-[#444] to-[#111]" />
    </footer>
  );
}

export default function App() {
  return (
    <div className="relative flex h-screen flex-col overflow-hidden bg-black font-['DejaVu_Sans_Condensed','DejaVu_Sans',sans-serif] text-[#111]">
      <main className="flex min-h-0 flex-1 flex-col border-x border-t-2 border-b border-[#3c4468] border-t-[#74788a] bg-[#d6d6d6]">
        <MenuBar />
        <div className="mx-[3px] mb-[3px] flex min-h-0 flex-1 flex-col border border-[#3f3f3f]">
          <OptionsBar />
          <div className="flex min-h-0 flex-1">
            <ToolBar />
            <div className="flex min-w-0 flex-1 flex-col">
              <div className="flex-1 border-t border-[#555] bg-[#808080]" />
              <AnimationPanel />
            </div>
            <aside className="flex w-[260px] shrink-0 flex-col border-l border-[#333]">
              <div className="flex h-[13px] shrink-0 items-center justify-between border-b border-black bg-gradient-to-b from-[#626262] to-[#3f3f3f] pr-[3px] pl-[25px]">
                <Svg w={8} h={5}><path d="M3.500 0v5L0 2.500zM7.500 0v5L4 2.500z" fill="#ddd" /></Svg>
                <Svg w={8} h={5}><path d="M0 0v5l3.500-2.500zM4 0v5l3.500-2.500z" fill="#ddd" /></Svg>
              </div>
              <div className="flex min-h-0 flex-1">
                <IconDock />
                <div className="flex min-w-0 flex-1 flex-col gap-[3px] bg-[#303030]">
                  <SwatchesPanel />
                  <CharacterPanel />
                  <LayersPanel />
                </div>
              </div>
            </aside>
          </div>
        </div>
      </main>
      <TaskBar />
      <NewDialog />
    </div>
  );
}
